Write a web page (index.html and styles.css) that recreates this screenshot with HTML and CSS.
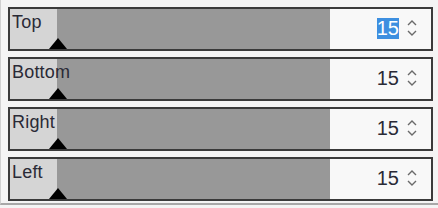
FILE: index.html
```html
<!DOCTYPE html>
<html lang="en">

<head>
    <meta charset="UTF-8">
    <meta name="viewport" content="width=device-width, initial-scale=1.0">
    <title>Margins</title>
    <link rel="stylesheet" href="styles.css">
</head>

<body>
    <!-- 面板 -->
    <div class="panel">
        <!-- 上 -->
        <div class="row">
            <div class="track">
                <span class="label">Top</span>
                <i class="thumb"></i>
            </div>
            <div class="spin">
                <span class="num selected">15</span>
                <svg class="arrows" width="12" height="18" viewBox="0 0 12 18">
                    <path d="M2 6 L6 2 L10 6 M2 12 L6 16 L10 12" />
                </svg>
            </div>
        </div>
        <!-- 下 -->
        <div class="row">
            <div class="track">
                <span class="label">Bottom</span>
                <i class="thumb"></i>
            </div>
            <div class="spin">
                <span class="num">15</span>
                <svg class="arrows" width="12" height="18" viewBox="0 0 12 18">
                    <path d="M2 6 L6 2 L10 6 M2 12 L6 16 L10 12" />
                </svg>
            </div>
        </div>
        <!-- 右 -->
        <div class="row">
            <div class="track">
                <span class="label">Right</span>
                <i class="thumb"></i>
            </div>
            <div class="spin">
                <span class="num">15</span>
                <svg class="arrows" width="12" height="18" viewBox="0 0 12 18">
                    <path d="M2 6 L6 2 L10 6 M2 12 L6 16 L10 12" />
                </svg>
            </div>
        </div>
        <!-- 左 -->
        <div class="row">
            <div class="track">
                <span class="label">Left</span>
                <i class="thumb"></i>
            </div>
            <div class="spin">
                <span class="num">15</span>
                <svg class="arrows" width="12" height="18" viewBox="0 0 12 18">
                    <path d="M2 6 L6 2 L10 6 M2 12 L6 16 L10 12" />
                </svg>
            </div>
        </div>
    </div>
</body>

</html>
```

FILE: styles.css
```css
* {
    margin: 0;
    padding: 0;
    box-sizing: border-box;
}

body {
    width: 438px;
    height: 208px;
    background-color: #f4f4f4;
    font-family: "Liberation Sans", Arial, sans-serif;
    overflow: hidden;
}

.panel {
    display: flex;
    flex-direction: column;
    gap: 6px;
    height: 205px;
    padding: 7px 5px 0 7px;
    border-left: 1px solid #d0d0d0;
    border-bottom: 2px solid #a8a8a8;
}

.row {
    display: flex;
    height: 44px;
    border: 2px solid #3a3a3a;
    box-shadow: inset 0 0 0 1px #6a6a6a;
}

/* 滑块轨道，左侧浅色为已选部分 */
.track {
    position: relative;
    flex: 1;
    background: linear-gradient(to right, #d5d5d5 47px, #989898 47px);
}

.label {
    display: block;
    padding: 3px 0 0 2px;
    font-size: 18px;
    letter-spacing: 0.2px;
    color: #2a2a36;
}

.thumb {
    position: absolute;
    left: 39px;
    bottom: 0;
    width: 0;
    height: 0;
    border-left: 9px solid transparent;
    border-right: 9px solid transparent;
    border-bottom: 11px solid #000;
}

/* 数字框 */
.spin {
    display: flex;
    align-items: center;
    justify-content: flex-end;
    gap: 7px;
    width: 101px;
    padding: 0 13px 2px 0;
    background-color: #f8f8f8;
}

.num {
    font-size: 20px;
    line-height: 21px;
    color: #2a2a36;
}

.selected {
    background-color: #3d8fe0;
    color: #fff;
}

.arrows path {
    fill: none;
    stroke: #6a6a6a;
    stroke-width: 1.4;
}
```
